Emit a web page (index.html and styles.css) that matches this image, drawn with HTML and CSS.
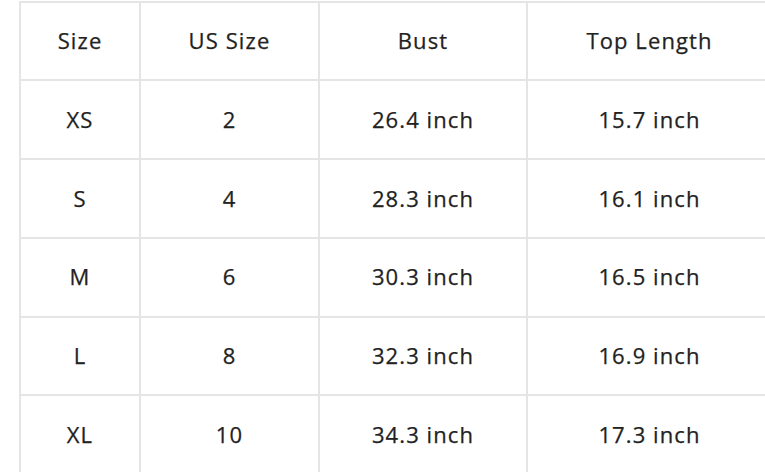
FILE: index.html
```html
<!DOCTYPE html>
<html>
<head>
<meta charset="utf-8">
<link rel="stylesheet" href="styles.css">
</head>
<body>
<table class="size-table">
  <colgroup>
    <col class="c1"><col class="c2"><col class="c3"><col class="c4">
  </colgroup>
  <thead>
    <tr><th>Size</th><th>US Size</th><th>Bust</th><th>Top Length</th></tr>
  </thead>
  <tbody>
    <tr><td>XS</td><td>2</td><td>26.4 inch</td><td>15.7 inch</td></tr>
    <tr><td>S</td><td>4</td><td>28.3 inch</td><td>16.1 inch</td></tr>
    <tr><td>M</td><td>6</td><td>30.3 inch</td><td>16.5 inch</td></tr>
    <tr><td>L</td><td>8</td><td>32.3 inch</td><td>16.9 inch</td></tr>
    <tr><td>XL</td><td>10</td><td>34.3 inch</td><td>17.3 inch</td></tr>
  </tbody>
</table>
</body>
</html>
```
FILE: styles.css
```css
html, body {
  margin: 0;
  padding: 0;
  background: #ffffff;
  overflow: hidden;
  width: 765px;
  height: 472px;
}
.size-table {
  margin: 0.5px 0 0 19px;
  border-collapse: separate;
  border-spacing: 0;
  table-layout: fixed;
  width: 752px;
  border-top: 2px solid #e5e5e5;
  border-left: 2px solid #e5e5e5;
  font-family: "Open Sans", "Liberation Sans", sans-serif;
  font-size: 22px;
  letter-spacing: 1.1px;
  color: #222222;
  -webkit-text-stroke: 0.25px #222222;
}
.c1 { width: 120px; }
.c2 { width: 179px; }
.c3 { width: 208px; }
.c4 { width: 245px; }
.size-table th,
.size-table td {
  font-weight: 400;
  text-align: center;
  vertical-align: middle;
  line-height: 24px;
  padding: 25.6px 0 27.2px;
  border-right: 2px solid #e5e5e5;
  border-bottom: 2px solid #e5e5e5;
}
```
